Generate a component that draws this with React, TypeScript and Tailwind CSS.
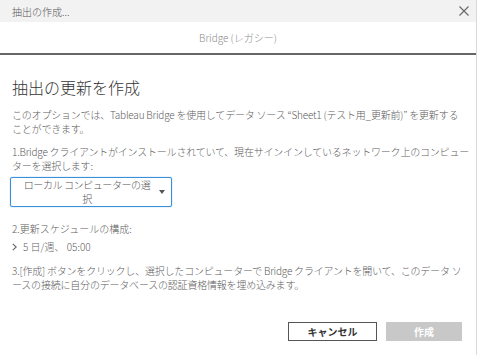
import React from 'react';

const font = "font-['Noto_Sans_CJK_JP','Noto_Sans',sans-serif]";

function CloseIcon() {
  return (
    <svg width="10" height="10" viewBox="0 0 10 10" className="text-[#666]">
      <path d="M0.5 0.5 L9.5 9.5 M9.5 0.5 L0.5 9.5" stroke="currentColor" strokeWidth="1.1" fill="none" />
    </svg>
  );
}

function Chevron() {
  return (
    <svg width="5" height="8" viewBox="0 0 5 8" className="text-[#666]">
      <path d="M0.8 0.8 L4.2 4 L0.8 7.2" stroke="currentColor" strokeWidth="1.1" fill="none" />
    </svg>
  );
}

export default function App() {
  return (
    <div className={`w-[478px] h-[355px] bg-white overflow-hidden font-light ${font}`}>
      <div className="w-[477px] h-[355px] border-r border-[#d9d9d9] flex flex-col">
        {/* title bar */}
        <div className="h-[22px] bg-[#f2f2f2] flex items-center justify-between pl-3 pr-[7px]">
          <span className="text-[10px] text-[#555]">抽出の作成...</span>
          <CloseIcon />
        </div>

        {/* tab */}
        <div className="h-[33px] flex items-center justify-center border-b-2 border-[#666]">
          <span className="text-[10px] text-[#8c8c8c]">Bridge (レガシー)</span>
        </div>

        {/* body */}
        <div className="pl-3 pr-[14px] flex flex-col text-[10px] leading-[14px] text-[#606060]">
          <h1 className="mt-5 text-[16px] leading-[24px] text-[#333] font-light">抽出の更新を作成</h1>

          <p className="mt-[9px] whitespace-nowrap tracking-[-0.2px]">
            このオプションでは、Tableau Bridge を使用してデータ ソース “Sheet1 (テスト用_更新前)” を更新する
            <br />
            ことができます。
          </p>

          <p className="mt-[9px] whitespace-nowrap tracking-[-0.2px]">
            1.Bridge クライアントがインストールされていて、現在サインインしているネットワーク上のコンピュー
            <br />
            ターを選択します:
          </p>

          <div className="mt-1 -ml-0.5 w-[162px] h-[30px] border border-[#3a8fd9] rounded-[2px] shadow-[0_0_1px_#3a8fd9] flex items-center pl-[10px] pr-[6px]">
            <span className="flex-1 text-center leading-[14px] text-[#555] whitespace-nowrap tracking-[-0.4px]">
              ローカル コンピューターの選
              <br />
              択
            </span>
            <span className="ml-[6px] w-0 h-0 border-l-[3px] border-r-[3px] border-t-[4px] border-l-transparent border-r-transparent border-t-[#555]" />
          </div>

          <p className="mt-[15px]">2.更新スケジュールの構成:</p>
          <div className="mt-1 flex items-center">
            <Chevron />
            <span className="ml-[6px]">5 日/週、 05:00</span>
          </div>

          <p className="mt-[10px] whitespace-nowrap tracking-[-0.2px]">
            3.[作成] ボタンをクリックし、選択したコンピューターで Bridge クライアントを開いて、このデータ ソ
            <br />
            ースの接続に自分のデータベースの認証資格情報を埋め込みます。
          </p>

          <div className="mt-[30px] flex justify-end gap-[9px]">
            <button className="w-[89px] h-[19px] border border-[#555] bg-white text-[10px] font-bold text-[#333] leading-none">
              キャンセル
            </button>
            <button className="w-[76px] h-[19px] bg-[#c8c8c8] text-[10px] font-bold text-white leading-none" disabled>
              作成
            </button>
          </div>
        </div>
      </div>
    </div>
  );
}
